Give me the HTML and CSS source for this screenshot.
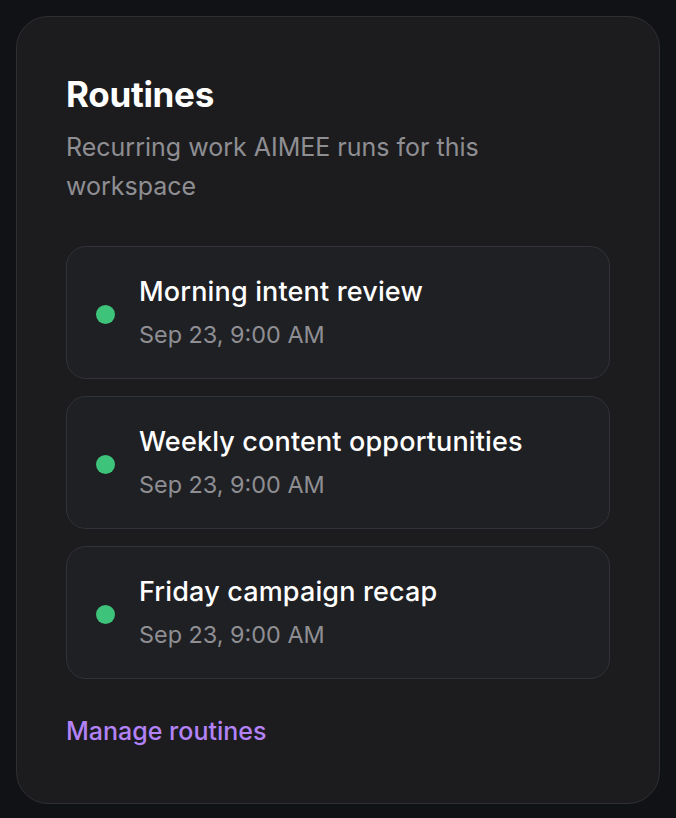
FILE: index.html
```html
<!DOCTYPE html>
<html lang="en">
<head>
<meta charset="utf-8">
<title>Routines</title>
<link rel="stylesheet" href="styles.css">
</head>
<body>
<section class="panel">
  <h2 class="panel-title">Routines</h2>
  <p class="panel-sub">Recurring work AIMEE runs for this workspace</p>
  <ul class="routine-list">
    <li class="routine">
      <span class="dot"></span>
      <div class="routine-text">
        <div class="routine-name">Morning intent review</div>
        <div class="routine-time">Sep 23, 9:00 AM</div>
      </div>
    </li>
    <li class="routine">
      <span class="dot"></span>
      <div class="routine-text">
        <div class="routine-name">Weekly content opportunities</div>
        <div class="routine-time">Sep 23, 9:00 AM</div>
      </div>
    </li>
    <li class="routine">
      <span class="dot"></span>
      <div class="routine-text">
        <div class="routine-name">Friday campaign recap</div>
        <div class="routine-time">Sep 23, 9:00 AM</div>
      </div>
    </li>
  </ul>
  <a class="manage" href="#">Manage routines</a>
</section>
</body>
</html>
```

FILE: styles.css
```css
* { box-sizing: border-box; }
html, body { margin: 0; padding: 0; }
body {
  background: #111216;
  font-family: Inter, "Noto Sans", sans-serif;
  padding: 16px;
  height: 818px;
}
.panel {
  width: 644px;
  height: 788px;
  background: #1c1c1e;
  border: 1px solid #2f2f33;
  border-radius: 32px;
  padding: 55px 49px 0 49px;
}
.panel-title {
  margin: 0;
  font-size: 35px;
  line-height: 44px;
  font-weight: 700;
  color: #ffffff;
  letter-spacing: -0.3px;
}
.panel-sub {
  margin: 12px 0 0 0;
  font-size: 25px;
  line-height: 39px;
  color: #8e8e93;
  max-width: 470px;
}
.routine-list {
  list-style: none;
  margin: 40px 0 0 0;
  padding: 0;
  display: flex;
  flex-direction: column;
  gap: 17px;
}
.routine {
  height: 133px;
  background: #1f2024;
  border: 1px solid #32333a;
  border-radius: 20px;
  display: flex;
  align-items: center;
  padding: 0 0 0 29px;
  gap: 24px;
}
.dot {
  width: 19px;
  height: 19px;
  border-radius: 50%;
  background: #3ec47a;
  flex: none;
  margin-top: 3px;
}
.routine-text {
  display: flex;
  flex-direction: column;
  gap: 9px;
}
.routine-name {
  font-size: 27px;
  line-height: 36px;
  font-weight: 500;
  color: #ffffff;
  letter-spacing: 0.15px;
}
.routine-time {
  font-size: 23.4px;
  line-height: 32px;
  color: #8e8e93;
}
.manage {
  display: inline-block;
  margin-top: 36px;
  font-size: 25px;
  line-height: 32px;
  color: #b382f7;
  text-decoration: none;
  font-weight: 500;
}
```
